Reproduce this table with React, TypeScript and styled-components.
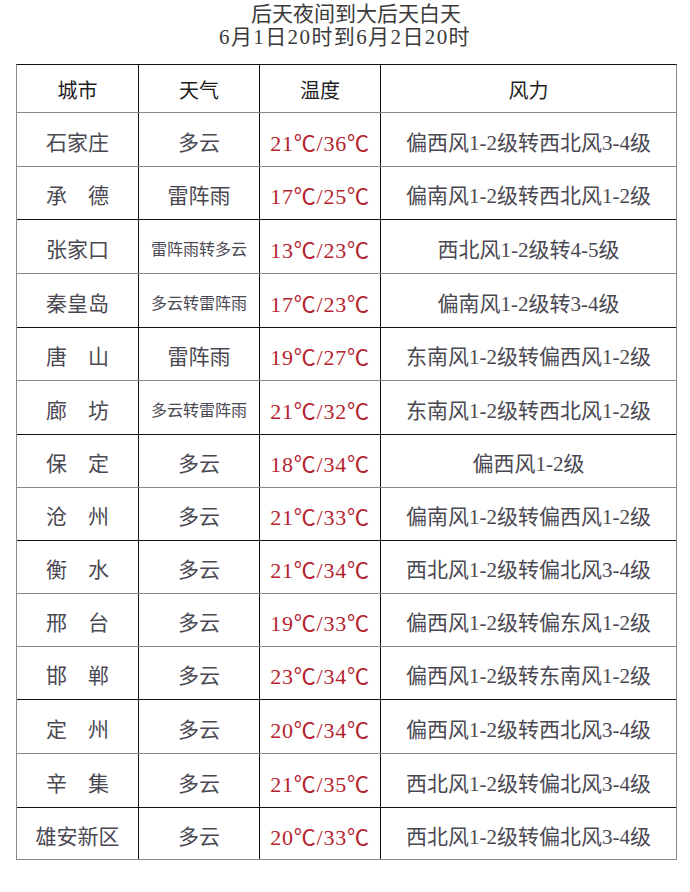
import React from "react";
import styled, { createGlobalStyle } from "styled-components";

const GRAY = "#8a8a8a";
const BLACK = "#111";

const GlobalStyle = createGlobalStyle`
    html, body {
        margin: 0;
        padding: 0;
        background: #fff;
    }
    body {
        font-family: "Liberation Serif", "Noto Sans CJK SC", serif;
        color: #4a4852;
    }
`;

const Page = styled.div`
    width: 690px;
    padding-top: 3px;
`;

const Title = styled.div`
    text-align: center;
    font-size: 21px;
    line-height: 23px;
    color: #3a3a3a;
    margin-bottom: 15px;
`;

const TitleLine = styled.div<{ $shift?: number; $spacing?: number }>`
    padding-left: ${(p) => p.$shift ?? 0}px;
    letter-spacing: ${(p) => p.$spacing ?? 0}px;
`;

const Table = styled.div`
    margin-left: 16px;
    width: 661px;
    box-sizing: border-box;
    border-left: 1px solid ${GRAY};
    border-right: 1px solid ${GRAY};
    border-top: 1px solid ${BLACK};
`;

const Row = styled.div<{ $h: number; $line: string }>`
    display: grid;
    grid-template-columns: 121px 121px 121px 296px;
    height: ${(p) => p.$h}px;
    box-sizing: border-box;
    border-bottom: 1px solid ${(p) => p.$line};
`;

const Cell = styled.div<{ $size?: number; $red?: boolean; $head?: boolean }>`
    display: flex;
    align-items: center;
    justify-content: center;
    box-sizing: border-box;
    white-space: nowrap;
    padding-top: 2px;
    font-size: ${(p) => p.$size ?? 21}px;
    letter-spacing: ${(p) => (p.$red ? "0.8px" : "0")};
    color: ${(p) => (p.$red ? "#b5232f" : p.$head ? "#1e1e1e" : "#4a4852")};
    & + & {
        border-left: 1px solid ${BLACK};
    }
`;

type Day = {
    city: string;
    weather: string;
    temp: string;
    wind: string;
    h: number;
    line: string;
};

const days: Day[] = [
    { city: "石家庄", weather: "多云", temp: "21℃/36℃", wind: "偏西风1-2级转西北风3-4级", h: 54, line: GRAY },
    { city: "承　德", weather: "雷阵雨", temp: "17℃/25℃", wind: "偏南风1-2级转西北风1-2级", h: 53, line: BLACK },
    { city: "张家口", weather: "雷阵雨转多云", temp: "13℃/23℃", wind: "西北风1-2级转4-5级", h: 54, line: GRAY },
    { city: "秦皇岛", weather: "多云转雷阵雨", temp: "17℃/23℃", wind: "偏南风1-2级转3-4级", h: 54, line: BLACK },
    { city: "唐　山", weather: "雷阵雨", temp: "19℃/27℃", wind: "东南风1-2级转偏西风1-2级", h: 53, line: GRAY },
    { city: "廊　坊", weather: "多云转雷阵雨", temp: "21℃/32℃", wind: "东南风1-2级转西北风1-2级", h: 54, line: BLACK },
    { city: "保　定", weather: "多云", temp: "18℃/34℃", wind: "偏西风1-2级", h: 53, line: GRAY },
    { city: "沧　州", weather: "多云", temp: "21℃/33℃", wind: "偏南风1-2级转偏西风1-2级", h: 53, line: BLACK },
    { city: "衡　水", weather: "多云", temp: "21℃/34℃", wind: "西北风1-2级转偏北风3-4级", h: 53, line: GRAY },
    { city: "邢　台", weather: "多云", temp: "19℃/33℃", wind: "偏西风1-2级转偏东风1-2级", h: 53, line: GRAY },
    { city: "邯　郸", weather: "多云", temp: "23℃/34℃", wind: "偏西风1-2级转东南风1-2级", h: 53, line: BLACK },
    { city: "定　州", weather: "多云", temp: "20℃/34℃", wind: "偏西风1-2级转西北风3-4级", h: 54, line: GRAY },
    { city: "辛　集", weather: "多云", temp: "21℃/35℃", wind: "西北风1-2级转偏北风3-4级", h: 54, line: BLACK },
    { city: "雄安新区", weather: "多云", temp: "20℃/33℃", wind: "西北风1-2级转偏北风3-4级", h: 52, line: GRAY },
];

export default function App() {
    return (
        <Page>
            <GlobalStyle />
            <Title>
                <TitleLine $shift={22}>后天夜间到大后天白天</TitleLine>
                <TitleLine $spacing={1.4}>6月1日20时到6月2日20时</TitleLine>
            </Title>
            <Table>
                <Row $h={48} $line={GRAY}>
                    <Cell $head $size={20}>城市</Cell>
                    <Cell $head $size={20}>天气</Cell>
                    <Cell $head $size={20}>温度</Cell>
                    <Cell $head $size={20}>风力</Cell>
                </Row>
                {days.map((d) => (
                    <Row key={d.city} $h={d.h} $line={d.line}>
                        <Cell>{d.city}</Cell>
                        <Cell $size={d.weather.length > 3 ? 16 : 21}>{d.weather}</Cell>
                        <Cell $red $size={22}>{d.temp}</Cell>
                        <Cell>{d.wind}</Cell>
                    </Row>
                ))}
            </Table>
        </Page>
    );
}
